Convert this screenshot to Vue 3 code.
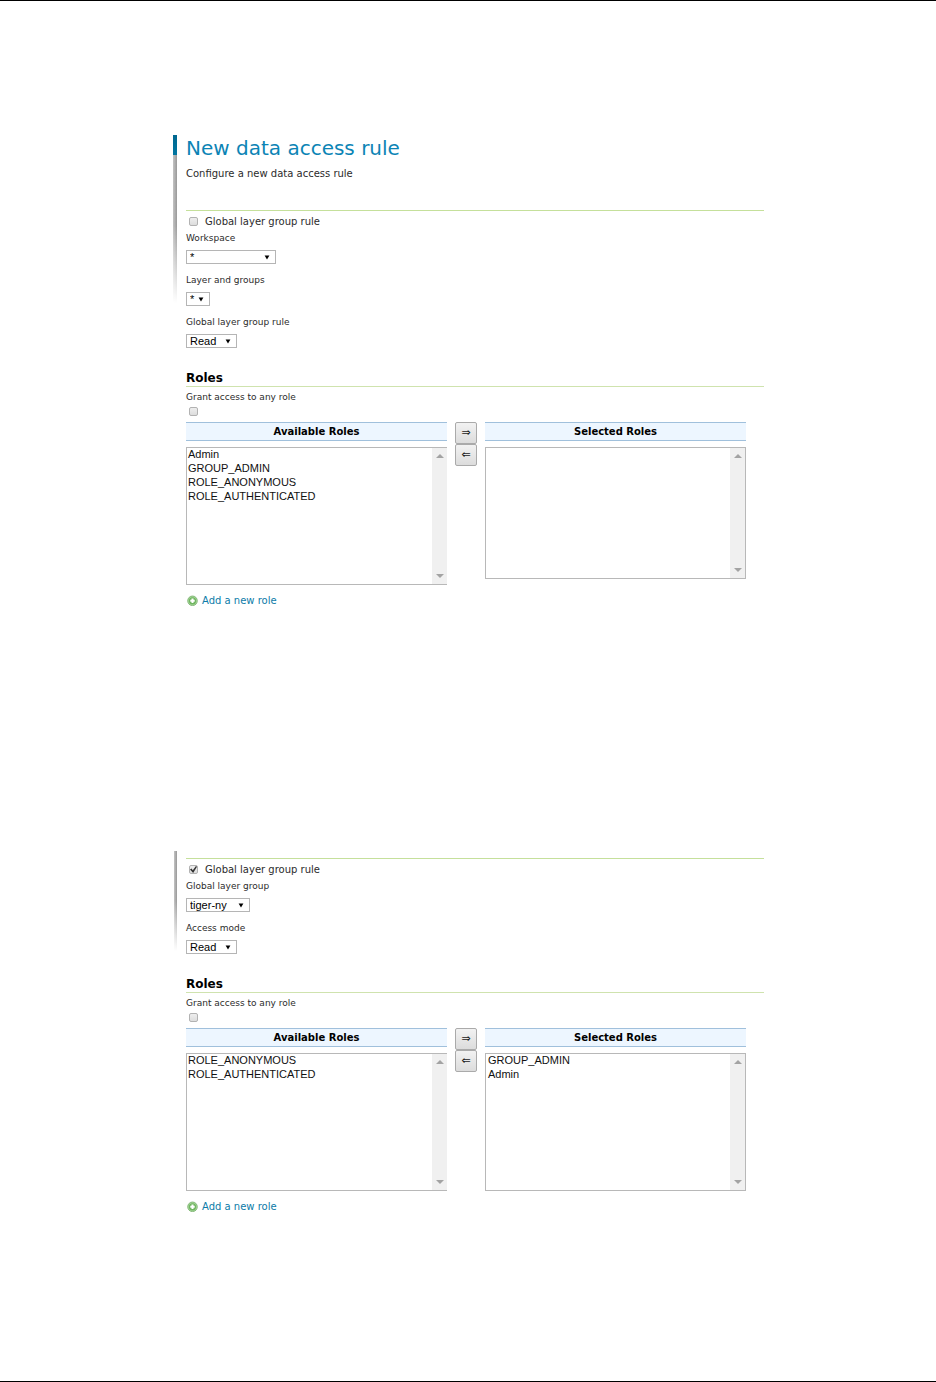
<script setup>
import { reactive } from "vue";

const rules = reactive([
  {
    id: "new-rule",
    title: "New data access rule",
    description: "Configure a new data access rule",
    globalRule: false,
    anyRole: false,
    fields: [
      { id: "workspace", label: "Workspace", value: "*", size: "wide" },
      { id: "layer", label: "Layer and groups", value: "*", size: "tiny" },
      { id: "access", label: "Global layer group rule", value: "Read", size: "small" },
    ],
    available: ["Admin", "GROUP_ADMIN", "ROLE_ANONYMOUS", "ROLE_AUTHENTICATED"],
    selected: [],
  },
  {
    id: "group-rule",
    globalRule: true,
    anyRole: false,
    fields: [
      { id: "group", label: "Global layer group", value: "tiger-ny", size: "medium" },
      { id: "mode", label: "Access mode", value: "Read", size: "small" },
    ],
    available: ["ROLE_ANONYMOUS", "ROLE_AUTHENTICATED"],
    selected: ["GROUP_ADMIN", "Admin"],
  },
]);

const picked = reactive({
  "new-rule": { available: [], selected: [] },
  "group-rule": { available: [], selected: [] },
});

function move(rule, from, to) {
  const names = picked[rule.id][from];
  rule[to].push(...names);
  rule[from] = rule[from].filter((name) => !names.includes(name));
  picked[rule.id][from] = [];
}
</script>

<template>
  <main class="page">
    <article v-for="rule in rules" :key="rule.id" class="rule" :class="{ titled: rule.title }">
      <div class="rule-bar"></div>
      <div class="rule-body">
        <header v-if="rule.title" class="rule-header">
          <h1>{{ rule.title }}</h1>
          <p>{{ rule.description }}</p>
        </header>

        <form class="rule-form" @submit.prevent>
          <label class="check-row">
            <input v-model="rule.globalRule" type="checkbox" />
            <span>Global layer group rule</span>
          </label>

          <div v-for="field in rule.fields" :key="field.id" class="field">
            <label :for="`${rule.id}-${field.id}`">{{ field.label }}</label>
            <div class="dropdown" :class="field.size">
              <select :id="`${rule.id}-${field.id}`" v-model="field.value">
                <option :value="field.value">{{ field.value }}</option>
              </select>
              <svg viewBox="0 0 6 5" aria-hidden="true"><path d="M0.6 0.4h4.8L3 4.6z" /></svg>
            </div>
          </div>

          <h2>Roles</h2>
          <div class="any-role">
            <label :for="`${rule.id}-any`">Grant access to any role</label>
            <input :id="`${rule.id}-any`" v-model="rule.anyRole" type="checkbox" />
          </div>

          <div class="picker">
            <div class="roles available">
              <label class="roles-title" :for="`${rule.id}-available`">Available Roles</label>
              <div class="listbox">
                <select :id="`${rule.id}-available`" v-model="picked[rule.id].available" multiple>
                  <option v-for="name in rule.available" :key="name">{{ name }}</option>
                </select>
                <div class="scroll" aria-hidden="true">
                  <svg viewBox="0 0 8 4"><path d="M0 4L4 0l4 4z" /></svg>
                  <svg viewBox="0 0 8 4"><path d="M0 0h8L4 4z" /></svg>
                </div>
              </div>
            </div>

            <div class="arrows">
              <button type="button" aria-label="Add" @click="move(rule, 'available', 'selected')">⇒</button>
              <button type="button" aria-label="Remove" @click="move(rule, 'selected', 'available')">⇐</button>
            </div>

            <div class="roles chosen">
              <label class="roles-title" :for="`${rule.id}-selected`">Selected Roles</label>
              <div class="listbox">
                <select :id="`${rule.id}-selected`" v-model="picked[rule.id].selected" multiple>
                  <option v-for="name in rule.selected" :key="name">{{ name }}</option>
                </select>
                <div class="scroll" aria-hidden="true">
                  <svg viewBox="0 0 8 4"><path d="M0 4L4 0l4 4z" /></svg>
                  <svg viewBox="0 0 8 4"><path d="M0 0h8L4 4z" /></svg>
                </div>
              </div>
            </div>
          </div>

          <a class="add-role" href="#">
            <svg viewBox="0 0 11 11" aria-hidden="true">
              <circle cx="5.5" cy="5.8" r="4.8" fill="#a9d89c" stroke="#74ad68" stroke-width="0.8" />
              <circle cx="5.5" cy="5.8" r="3.6" fill="#6fb55f" />
              <path d="M4.5 3.6h2v1.2h1.2v2H6.5V8h-2V6.8H3.3v-2h1.2z" fill="#fff" />
            </svg>
            <span>Add a new role</span>
          </a>
        </form>
      </div>
    </article>
  </main>
</template>

<style>
body {
  margin: 0;
  background: #fff;
}
</style>

<style scoped>
.page {
  box-sizing: border-box;
  min-height: 100vh;
  padding: 134px 172px 100px 173px;
  border-top: 1px solid #000;
  border-bottom: 1px solid #000;
  color: #2b2b2b;
  font-family: "DejaVu Sans", Verdana, sans-serif;
  font-size: 10px;
}

.rule {
  display: flex;
  gap: 9px;
}

.rule + .rule {
  margin-top: 243px;
}

.rule-bar {
  width: 3px;
  height: 100px;
  margin-left: 1px;
  background:
    linear-gradient(transparent 50%, #fff),
    linear-gradient(to right, #c4c4c4, #999);
}

.titled .rule-bar {
  width: 4px;
  height: 168px;
  margin-left: 0;
  background:
    linear-gradient(#00678f, #0076a1 20px, transparent 20px, transparent 90px, #fff),
    linear-gradient(to right, #c4c4c4, #999);
}

.rule-body {
  flex: 1;
  min-width: 0;
  padding-top: 7px;
}

.titled .rule-body {
  padding-top: 0;
}

.rule-header {
  margin-bottom: 28px;
}

h1 {
  margin: 0 0 5px;
  color: #0c84b5;
  font-size: 20px;
  font-weight: 400;
  line-height: 26px;
}

.rule-header p {
  margin: 0;
  line-height: 16px;
}

.titled .rule-header p {
  padding-top: 0;
}

.rule-form {
  border-top: 1px solid #c5e09b;
}

.check-row {
  display: flex;
  align-items: center;
  gap: 7px;
  height: 21px;
  padding-left: 3px;
}

input[type="checkbox"] {
  display: block;
  box-sizing: border-box;
  width: 9px;
  height: 9px;
  margin: 0;
  appearance: none;
  border: 1px solid #b2b2b2;
  border-radius: 2px;
  background: linear-gradient(#eee, #ddd);
}

input[type="checkbox"]:checked::after {
  display: block;
  width: 7px;
  height: 7px;
  background: #333;
  clip-path: polygon(0 50%, 20% 35%, 40% 60%, 85% 0, 100% 12%, 45% 100%);
  content: "";
}

.field {
  margin-bottom: 10px;
}

.field label,
.any-role label {
  display: block;
  font-size: 9px;
  line-height: 12px;
}

.dropdown {
  position: relative;
  height: 14px;
  margin-top: 6px;
}

.dropdown select {
  box-sizing: border-box;
  display: block;
  width: 100%;
  height: 14px;
  padding: 0 3px;
  appearance: none;
  border: 1px solid #b5b5b5;
  border-radius: 0;
  background: #fff;
  color: #000;
  font: 11px/12px "Liberation Sans", Arial, sans-serif;
}

.dropdown svg {
  position: absolute;
  top: 5px;
  right: 6px;
  width: 6px;
  height: 5px;
  pointer-events: none;
}

.wide {
  width: 90px;
}

.medium {
  width: 64px;
}

.small {
  width: 51px;
}

.tiny {
  width: 24px;
}

h2 {
  margin: 22px 0 4px;
  border-bottom: 1px solid #cfe3ae;
  color: #000;
  font-size: 12px;
  line-height: 16px;
}

.any-role input[type="checkbox"] {
  margin: 4px 3px 6px;
}

.picker {
  display: flex;
  align-items: flex-start;
  gap: 8px;
  max-width: 560px;
}

.roles {
  flex: 1;
  min-width: 0;
}

.roles-title {
  display: block;
  margin-bottom: 6px;
  border-top: 1px solid #a0c0dc;
  border-bottom: 1px solid #a0c0dc;
  background: #edf6ff;
  color: #000;
  font-weight: 700;
  line-height: 17px;
  text-align: center;
}

.listbox {
  box-sizing: border-box;
  display: flex;
  height: 138px;
  border: 1px solid #b8b8b8;
}

.available .listbox {
  border-right: 0;
}

.titled .chosen .listbox {
  height: 132px;
}

.listbox select {
  flex: 1;
  min-width: 0;
  height: 100%;
  padding: 0;
  border: 0;
  border-radius: 0;
  outline: 0;
  background: #fff;
  color: #111;
  font: 11px/14px "Liberation Sans", Arial, sans-serif;
  scrollbar-width: none;
}

.listbox option {
  min-height: 14px;
  padding: 0 1px;
  line-height: 14px;
}

.chosen .listbox option {
  padding: 0 2px;
}

.scroll {
  display: flex;
  flex-direction: column;
  align-items: center;
  justify-content: space-between;
  box-sizing: border-box;
  width: 15px;
  padding: 6px 0;
  background: #f0f0f0;
}

.scroll svg {
  width: 8px;
  height: 4px;
  fill: #a3a3a3;
}

.arrows {
  display: flex;
  flex-direction: column;
}

.arrows button {
  box-sizing: border-box;
  width: 22px;
  height: 22px;
  padding: 0;
  border: 1px solid #aaa;
  border-radius: 2px;
  background: linear-gradient(#f2f2f2, #dcdcdc);
  color: #222;
  font: 11px/20px "DejaVu Sans", sans-serif;
}

.add-role {
  display: flex;
  align-items: center;
  gap: 4px;
  width: fit-content;
  margin-top: 8px;
  padding-left: 1px;
  color: #0c7ba8;
  line-height: 15px;
  text-decoration: none;
}

.add-role svg {
  width: 11px;
  height: 11px;
}
</style>
